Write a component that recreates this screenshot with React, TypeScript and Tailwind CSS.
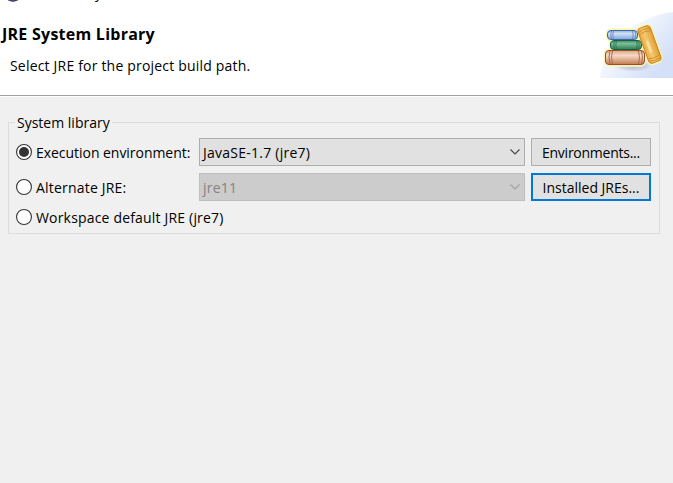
import type { ReactNode } from "react";

function Books() {
  return (
    <svg className="h-[66px] w-[73px] shrink-0" viewBox="600 12 73 66">
      <defs>
        <linearGradient id="sky" x1="0.2" x2="1" y1="0" y2="0.6">
          <stop offset="0" stopColor="#f8faff" />
          <stop offset="0.45" stopColor="#f0f4fd" />
          <stop offset="1" stopColor="#d3e0f7" />
        </linearGradient>
        <linearGradient id="blue" x1="0" x2="0" y1="0" y2="1">
          <stop offset="0" stopColor="#8fb2dd" />
          <stop offset="0.35" stopColor="#d0e0f5" />
          <stop offset="1" stopColor="#7da5d8" />
        </linearGradient>
        <linearGradient id="green" x1="0" x2="0" y1="0" y2="1">
          <stop offset="0" stopColor="#3c8f68" />
          <stop offset="0.35" stopColor="#80bd98" />
          <stop offset="1" stopColor="#287c55" />
        </linearGradient>
        <linearGradient id="brown" x1="0" x2="0" y1="0" y2="1">
          <stop offset="0" stopColor="#daa685" />
          <stop offset="0.35" stopColor="#f5dac7" />
          <stop offset="1" stopColor="#c47b52" />
        </linearGradient>
        <linearGradient id="gold" x1="0" x2="1" y1="0" y2="0">
          <stop offset="0" stopColor="#e9ab40" />
          <stop offset="0.4" stopColor="#f4c772" />
          <stop offset="1" stopColor="#e0a036" />
        </linearGradient>
        <radialGradient id="shade">
          <stop offset="0" stopColor="#b9bed2" />
          <stop offset="0.65" stopColor="#cfd4e5" />
          <stop offset="1" stopColor="#dfe5f4" stopOpacity="0" />
        </radialGradient>
      </defs>
      <path d="M600 78C603 50 630 17 673 12V78Z" fill="url(#sky)" />
      <ellipse cx="634" cy="66" rx="21" ry="6" fill="url(#shade)" />
      <g fill="#faf5b5" stroke="#faf5b5" strokeWidth="3.5">
        <rect x="607.5" y="30" width="30" height="10" rx="4" />
        <rect x="610.5" y="40" width="31" height="10" rx="4" />
        <rect x="605.5" y="50" width="39" height="15" rx="4" />
        <rect x="-6.5" y="-19" width="13" height="38" rx="4" transform="translate(649.5 44.5) rotate(-20)" />
      </g>
      <rect x="607.5" y="30.5" width="30" height="9" rx="3.5" fill="url(#blue)" stroke="#4067a3" />
      <path d="M611.5 31q-1.5 4 0 8M613.5 31q-1.5 4 0 8M632.5 31q1.5 4 0 8M635 31q1.5 4 0 8" fill="none" stroke="#5d83b8" strokeWidth=".8" />
      <rect x="610.5" y="40.5" width="31" height="9" rx="3.5" fill="url(#green)" stroke="#17613f" />
      <path d="M614.5 41q-1.5 4 0 8M616.5 41q-1.5 4 0 8M636.5 41q1.5 4 0 8M638.5 41q1.5 4 0 8" fill="none" stroke="#257250" strokeWidth=".8" />
      <rect x="605.5" y="50.5" width="39" height="14" rx="3.5" fill="url(#brown)" stroke="#994d29" />
      <path d="M610 51q-2 6 0 13M612.5 51q-2 6 0 13M638.5 51q2 6 0 13M641.5 51q2 6 0 13" fill="none" stroke="#a56440" strokeWidth=".9" />
      <g transform="translate(649.5 44.5) rotate(-20)">
        <rect x="-6.5" y="-18.5" width="13" height="37" rx="3.5" fill="url(#gold)" stroke="#c8811f" />
        <path d="M-6-15q6-2.5 12 0M-6-12.5q6-2.5 12 0M-6 13q6 2.5 12 0M-6 15.5q6 2.5 12 0" fill="none" stroke="#d18c2b" strokeWidth=".8" />
        <path d="M-1-3V7" stroke="#fff0bc" strokeWidth="3" strokeLinecap="round" opacity=".55" />
      </g>
    </svg>
  );
}

function Radio({ checked = false, children }: { checked?: boolean; children: ReactNode }) {
  return (
    <label className="flex items-center gap-1">
      <svg className="size-4 shrink-0" viewBox="0 0 16 16">
        <circle cx="8" cy="8" r="7.45" fill="white" stroke="#333" strokeWidth="1.1" />
        {checked && <circle cx="8" cy="8" r="5" fill="#333" />}
      </svg>
      <span className="pt-[2px] whitespace-nowrap">{children}</span>
    </label>
  );
}

function Combo({ disabled = false, children }: { disabled?: boolean; children: ReactNode }) {
  return (
    <div className={disabled
      ? "flex h-7 w-[326px] items-center justify-between border border-[#bfbfbf] bg-[#ccc] pr-1 pl-[3px] text-[#838383]"
      : "flex h-7 w-[326px] items-center justify-between border border-[#adadad] bg-[#e1e1e1] pr-1 pl-[3px]"}>
      <span className="pt-[2px] tracking-[0.25px]">{children}</span>
      <svg className="h-[6px] w-[10px]" viewBox="0 0 10 6">
        <path d="M.5.5 5 5 9.5.5" fill="none" stroke={disabled ? "#a0a0a0" : "#444"} strokeWidth="1.1" />
      </svg>
    </div>
  );
}

export default function App() {
  return (
    <main className="flex h-[483px] w-[673px] flex-col overflow-hidden bg-[#f0f0f0] font-['Open_Sans','Noto_Sans',sans-serif] text-[14px] leading-5 text-black">
      <header className="flex h-24 shrink-0 flex-col border-b border-[#a0a0a0] bg-white">
        <div className="flex h-3 items-start overflow-hidden">
          <svg className="ml-[5px] h-[3px] w-4" viewBox="0 0 16 3">
            <ellipse cx="8" cy="-5" rx="7.5" ry="6.8" fill="#2c2255" />
            <path d="M3 .4h10" stroke="#6a5b91" strokeWidth=".6" />
          </svg>
          <span className="-mt-[17px] ml-[74px]">y</span>
        </div>
        <div className="flex justify-between">
          <div>
            <h1 className="mt-3 ml-[2px] text-[16px] leading-5 font-bold tracking-[0.25px]">JRE System Library</h1>
            <p className="mt-3 ml-[10px] tracking-[0.19px]">Select JRE for the project build path.</p>
          </div>
          <Books />
        </div>
      </header>
      <div className="h-px shrink-0 bg-white" />
      <fieldset className="mt-[15px] ml-2 h-[122px] w-[652px] border border-[#dcdcdc]">
        <legend className="ml-[6px] h-[21px] px-[2px] leading-[21px]">System library</legend>
        <div className="ml-[7px] grid grid-cols-[183px_332px_120px] gap-y-[7px] pt-[5px]">
          <Radio checked><span className="tracking-[-0.04px]">Execution environment:</span></Radio>
          <Combo>JavaSE-1.7 (jre7)</Combo>
          <button className="h-7 border border-[#adadad] bg-[#e1e1e1] pt-[2px] tracking-[-0.25px]">Environments...</button>
          <Radio><span className="tracking-[0.2px]">Alternate JRE:</span></Radio>
          <Combo disabled>jre11</Combo>
          <button className="h-7 border-2 border-[#0078d7] bg-[#e1e1e1] pt-[2px]">Installed JREs...</button>
        </div>
        <div className="mt-[5px] ml-[7px]"><Radio><span className="tracking-[0.18px]">Workspace default JRE (jre7)</span></Radio></div>
      </fieldset>
    </main>
  );
}
